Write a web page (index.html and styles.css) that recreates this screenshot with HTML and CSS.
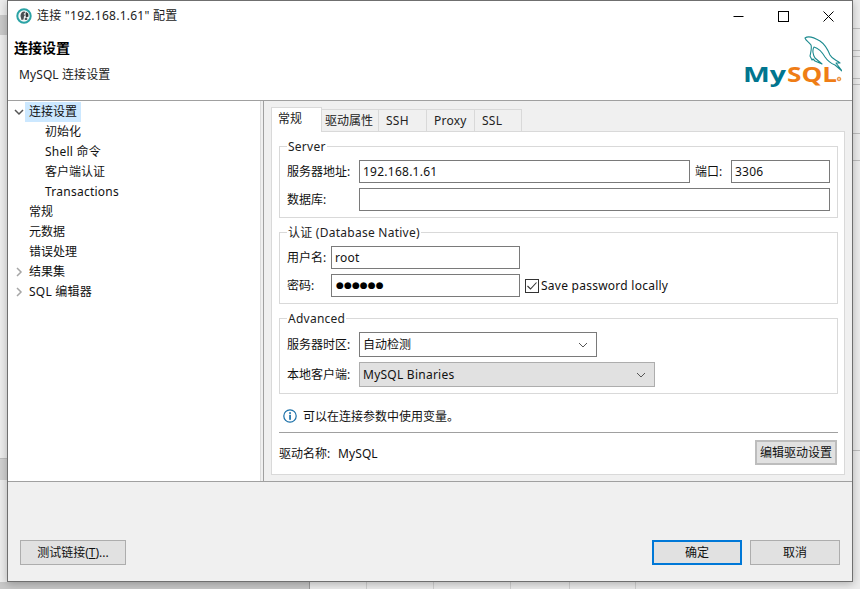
FILE: index.html
```html
<!DOCTYPE html>
<html lang="zh-CN">
<head>
<meta charset="utf-8">
<title>连接配置</title>
<link rel="stylesheet" href="styles.css">
</head>
<body>
<div class="backdrop-lines"></div>
<div class="window">
  <div class="titlebar">
    <svg class="app-icon" width="16" height="16" viewBox="0 0 16 16">
      <circle cx="8" cy="8" r="6.700" fill="#f4f8f8" stroke="#2ba3a5" stroke-width="2"/>
      <path d="M4.500 8c0-2.500 1.500-4.500 3.500-4.500 .8 0 1.200.4 1 1.200L7.500 6 9 7l-1 1.500-.5 3-2 .5z" fill="#4a4f52"/>
      <path d="M9.800 3.800l2.400 1.700.3 3-2.500 1-.5-2.500z" fill="#33383b"/>
      <path d="M8.800 9.800h2.400v2.200H8.800z" fill="#555b5e"/>
    </svg>
    <span class="title-text latin">连接 "192.168.1.61" 配置</span>
    <div class="win-controls">
      <svg width="11" height="11" viewBox="0 0 11 11"><path d="M0.500 5.500h10" stroke="#000" fill="none"/></svg>
      <svg width="11" height="11" viewBox="0 0 11 11"><rect x=".5" y=".5" width="10" height="10" stroke="#000" fill="none"/></svg>
      <svg width="11" height="11" viewBox="0 0 11 11"><path d="M.5.500l10 10M10.500.500l-10 10" stroke="#000" fill="none"/></svg>
    </div>
  </div>

  <header class="header">
    <div class="header-text">
      <div class="header-title">连接设置</div>
      <div class="header-sub">MySQL 连接设置</div>
    </div>
    <svg class="logo" width="100" height="54" viewBox="0 0 100 54">
      <path d="M63 3C67 0 73 3 78 6 84 10 86 15 88 20 90 24 94 25 98 28L94 28 100 36 93 30C88 28 85 25 83 22 80 17 76 13 72 12 70 15 71 20 73 23L80 29 73 26 71 24 70 25 68 21C69 16 70 13 69 10 67 7 64 6 63 3Z" fill="none" stroke="#1b8a8f" stroke-width="1.100" stroke-linejoin="round"/>
      <text class="logo-text logo-my" x="1" y="47" textLength="43" lengthAdjust="spacingAndGlyphs">My</text>
      <text class="logo-text logo-sql" x="45" y="47" textLength="50" lengthAdjust="spacingAndGlyphs">SQL</text>
      <circle cx="97" cy="44" r="1.800" fill="#f6c79a" stroke="#e97b17" stroke-width=".8"/>
    </svg>
  </header>

  <main class="main">
    <nav class="tree">
      <div class="node"><svg class="chev" width="10" height="10" viewBox="0 0 10 10"><path d="M1 3l4 4 4-4" fill="none" stroke="#555" stroke-width="1.500"/></svg><span class="node-label selected">连接设置</span></div>
      <div class="node child"><span class="node-label">初始化</span></div>
      <div class="node child"><span class="node-label latin">Shell 命令</span></div>
      <div class="node child"><span class="node-label">客户端认证</span></div>
      <div class="node child"><span class="node-label latin">Transactions</span></div>
      <div class="node"><span class="chev-space"></span><span class="node-label">常规</span></div>
      <div class="node"><span class="chev-space"></span><span class="node-label">元数据</span></div>
      <div class="node"><span class="chev-space"></span><span class="node-label">错误处理</span></div>
      <div class="node"><svg class="chev" width="10" height="10" viewBox="0 0 10 10"><path d="M3 1l4 4-4 4" fill="none" stroke="#a6a6a6" stroke-width="1.500"/></svg><span class="node-label">结果集</span></div>
      <div class="node"><svg class="chev" width="10" height="10" viewBox="0 0 10 10"><path d="M3 1l4 4-4 4" fill="none" stroke="#a6a6a6" stroke-width="1.500"/></svg><span class="node-label latin">SQL 编辑器</span></div>
    </nav>
    <div class="sash"></div>
    <section class="content">
      <div class="tabs">
        <div class="tab active tab-general">常规</div>
        <div class="tab tab-driver">驱动属性</div>
        <div class="tab tab-ssh latin">SSH</div>
        <div class="tab tab-proxy latin">Proxy</div>
        <div class="tab tab-ssl latin">SSL</div>
      </div>
      <div class="pane">
        <div class="group">
          <div class="legend latin">Server</div>
          <div class="grid grid-server">
            <label>服务器地址:</label>
            <div class="input latin">192.168.1.61</div>
            <label class="port-label">端口:</label>
            <div class="input latin">3306</div>
            <label>数据库:</label>
            <div class="input span3"></div>
          </div>
        </div>
        <div class="group">
          <div class="legend latin">认证 (Database Native)</div>
          <div class="grid grid-auth">
            <label>用户名:</label>
            <div class="input latin">root</div>
            <div></div>
            <label>密码:</label>
            <div class="input dots">●●●●●●</div>
            <div class="check">
              <svg width="14" height="14" viewBox="0 0 14 14"><rect x=".5" y=".5" width="13" height="13" fill="#fff" stroke="#333"/><path d="M2.500 7l3 3 6-6.500" fill="none" stroke="#333" stroke-width="1.100"/></svg>
              <span class="latin">Save password locally</span>
            </div>
          </div>
        </div>
        <div class="group">
          <div class="legend latin">Advanced</div>
          <div class="grid grid-adv">
            <label>服务器时区:</label>
            <div class="select select-tz"><span>自动检测</span><svg width="10" height="6" viewBox="0 0 10 6"><path d="M1 1l4 4 4-4" fill="none" stroke="#555"/></svg></div>
            <label>本地客户端:</label>
            <div class="select select-client"><span class="latin">MySQL Binaries</span><svg width="10" height="6" viewBox="0 0 10 6"><path d="M1 1l4 4 4-4" fill="none" stroke="#555"/></svg></div>
          </div>
        </div>
        <div class="info">
          <svg width="14" height="14" viewBox="0 0 14 14"><circle cx="7" cy="7" r="6.200" fill="#fff" stroke="#1a6fa8" stroke-width="1.200"/><rect x="6.200" y="5.800" width="1.700" height="5" fill="#1a6fa8"/><rect x="6.200" y="3.200" width="1.700" height="1.700" fill="#1a6fa8"/></svg>
          <span class="info-text">可以在连接参数中使用变量。</span>
        </div>
        <div class="driver">
          <span class="driver-label">驱动名称:</span>
          <span class="driver-name">MySQL</span>
          <button class="btn btn-driver">编辑驱动设置</button>
        </div>
      </div>
    </section>
  </main>

  <footer class="footer">
    <button class="btn btn-foot">测试链接(<u>T</u>)...</button>
    <div class="foot-right">
      <button class="btn btn-foot-r btn-default">确定</button>
      <button class="btn btn-foot-r">取消</button>
    </div>
  </footer>
</div>
</body>
</html>
```
FILE: styles.css
```css
* { box-sizing: border-box; }
html, body { margin: 0; padding: 0; }
body {
  width: 860px;
  height: 589px;
  overflow: hidden;
  position: relative;
  background: #eaeaea;
  font-family: "Noto Sans", "Noto Sans CJK SC", sans-serif;
  font-size: 12px;
  line-height: 16px;
  color: #111;
}
.latin { letter-spacing: .25px; }
.backdrop-lines {
  position: absolute;
  inset: 0;
  background:
    linear-gradient(#c9c9c9, #c9c9c9) 0 15px / 8px 20px no-repeat,
    linear-gradient(#bdbdbd, #bdbdbd) 0 458px / 8px 1px no-repeat,
    linear-gradient(#d0d0d0, #d0d0d0) 0 459px / 8px 21px no-repeat,
    linear-gradient(#bdbdbd, #bdbdbd) 852px 28px / 8px 1px no-repeat,
    linear-gradient(#bdbdbd, #bdbdbd) 852px 50px / 8px 1px no-repeat,
    linear-gradient(#bdbdbd, #bdbdbd) 852px 56px / 8px 1px no-repeat,
    linear-gradient(#bdbdbd, #bdbdbd) 852px 78px / 8px 1px no-repeat,
    linear-gradient(#bdbdbd, #bdbdbd) 852px 84px / 8px 1px no-repeat,
    linear-gradient(#bdbdbd, #bdbdbd) 852px 133px / 8px 1px no-repeat,
    linear-gradient(#bdbdbd, #bdbdbd) 852px 160px / 8px 1px no-repeat,
    linear-gradient(#bdbdbd, #bdbdbd) 852px 450px / 8px 1px no-repeat,
    linear-gradient(#c8c8c8, #c8c8c8) 0 582px / 309px 7px no-repeat,
    linear-gradient(#9a9a9a, #9a9a9a) 309px 582px / 1px 7px no-repeat,
    linear-gradient(#d0d0d0, #d0d0d0) 366px 582px / 1px 7px no-repeat,
    linear-gradient(#d0d0d0, #d0d0d0) 433px 582px / 1px 7px no-repeat,
    linear-gradient(#d0d0d0, #d0d0d0) 510px 582px / 1px 7px no-repeat,
    linear-gradient(#d0d0d0, #d0d0d0) 569px 582px / 1px 7px no-repeat,
    linear-gradient(#d0d0d0, #d0d0d0) 635px 582px / 1px 7px no-repeat,
    #ececec;
}
.window {
  position: absolute;
  left: 7px;
  top: 0;
  width: 846px;
  height: 582px;
  border: 1px solid #6f6f6f;
  background: #fff;
  box-shadow: 0 2px 8px rgba(0, 0, 0, .25);
  display: flex;
  flex-direction: column;
}

/* title bar */
.titlebar {
  height: 30px;
  flex: none;
  display: flex;
  align-items: center;
  padding-left: 8px;
  background: #fff;
}
.app-icon { flex: none; margin-top: -1px; }
.title-text { margin-left: 5px; margin-top: -1px; color: #222; }
.win-controls {
  margin-left: auto;
  margin-right: 18px;
  display: flex;
  gap: 34px;
}

/* header */
.header {
  height: 70px;
  flex: none;
  display: flex;
  justify-content: space-between;
  border-bottom: 1px solid #a0a0a0;
}
.header-text { padding: 8px 0 0 6px; }
.header-title { font-weight: 700; font-size: 14px; line-height: 18px; color: #000; }
.header-sub { margin: 10px 0 0 5px; color: #222; letter-spacing: .1px; }
.logo { margin: 4px 10px 0 0; flex: none; }
.logo-text { font-family: "Open Sans", sans-serif; font-size: 21px; font-weight: 700; }
.logo-my { fill: #00758f; }
.logo-sql { fill: #ef7d16; }

/* main */
.main {
  height: 381px;
  flex: none;
  display: flex;
  border-bottom: 1px solid #a0a0a0;
}
.tree {
  width: 253px;
  flex: none;
  padding: 1px 0 0 5px;
  background: #fff;
  border-right: 1px solid #dcdcdc;
}
.node { height: 20px; display: flex; align-items: center; }
.node.child { padding-left: 28px; }
.chev { flex: none; margin: 0 1px 0 1px; }
.chev-space { width: 12px; flex: none; }
.node-label { padding: 0 4px; height: 20px; line-height: 20px; white-space: nowrap; }
.selected { background: #cce8ff; }
.sash { width: 2px; flex: none; background: #f0f0f0; }
.content {
  width: 589px;
  flex: none;
  background: #f0f0f0;
  border-left: 1px solid #a0a0a0;
  padding: 6px 7px 0 7px;
}

/* tabs */
.tabs { height: 24px; display: flex; align-items: flex-end; position: relative; z-index: 1; }
.tab {
  height: 22px;
  border: 1px solid #d9d9d9;
  border-left: none;
  border-bottom: none;
  padding-left: 5px;
  line-height: 21px;
  color: #222;
}
.tab.active {
  height: 25px;
  margin-bottom: -1px;
  background: #fff;
  border-left: 1px solid #d9d9d9;
  padding-left: 6px;
  line-height: 21px;
}
.tab-general { width: 51px; }
.tab-driver { width: 57px; padding-left: 3px; }
.tab-ssh { width: 48px; padding-left: 7px; }
.tab-proxy { width: 48px; padding-left: 7px; }
.tab-ssl { width: 47px; padding-left: 7px; }

.pane {
  height: 344px;
  background: #fff;
  border: 1px solid #d9d9d9;
  padding: 14px 6px 0 7px;
}

/* groups */
.group {
  border: 1px solid #d9d9d9;
  padding: 0 7px 6px 7px;
  margin-bottom: 14px;
}
.legend {
  width: fit-content;
  margin: -8px 0 5px 0;
  padding: 0 1px;
  background: #fff;
  color: #222;
}
.grid { display: grid; row-gap: 5px; align-items: center; }
.grid-server { grid-template-columns: 72px 331px 41px 99px; grid-auto-rows: 23px; }
.grid-auth { grid-template-columns: 44px 189px 1fr; grid-auto-rows: 23px; }
.grid-adv { grid-template-columns: 72px 1fr; grid-auto-rows: 25px; justify-items: start; }
.port-label { padding-left: 5px; }
.span3 { grid-column: span 3; }
.input {
  height: 23px;
  border: 1px solid #7a7a7a;
  background: #fff;
  padding: 0 3px;
  line-height: 21px;
}
.dots { font-size: 9px; letter-spacing: .1px; padding-left: 4px; font-family: "DejaVu Sans", sans-serif; color: #000; }
.check { display: flex; align-items: center; padding-left: 5px; gap: 2px; }
.select {
  height: 25px;
  border: 1px solid #7a7a7a;
  background: #fff;
  padding: 0 3px;
  display: flex;
  align-items: center;
  justify-content: space-between;
}
.select svg { margin-right: 5px; flex: none; }
.select-tz { width: 238px; }
.select-client { width: 296px; background: #e1e1e1; border-color: #adadad; }

/* info + driver */
.info {
  display: flex;
  align-items: center;
  gap: 6px;
  height: 16px;
  margin-top: 1px;
  padding-left: 4px;
}
.info-text { padding-top: 2px; }
.driver {
  margin-top: 8px;
  border-top: 1px solid #a0a0a0;
  padding: 7px 0 0 0;
  display: flex;
  align-items: center;
}
.driver-label { width: 59px; padding-top: 2px; }
.driver-name { letter-spacing: .1px; padding-top: 2px; }
.btn {
  font: inherit;
  color: #111;
  background: #e1e1e1;
  border: 1px solid #adadad;
  height: 25px;
  padding: 0;
  border-radius: 0;
}
.btn-driver { width: 82px; margin: 0 1px 0 auto; border: 2px solid #bdbdbd; }

/* footer */
.footer {
  flex: 1;
  background: #f0f0f0;
  padding: 58px 12px 0 12px;
  display: flex;
  align-items: flex-start;
  justify-content: space-between;
}
.btn-foot { width: 106px; }
.foot-right { display: flex; gap: 8px; }
.btn-foot-r { width: 90px; }
.btn-default { border: 2px solid #0078d7; }
```
